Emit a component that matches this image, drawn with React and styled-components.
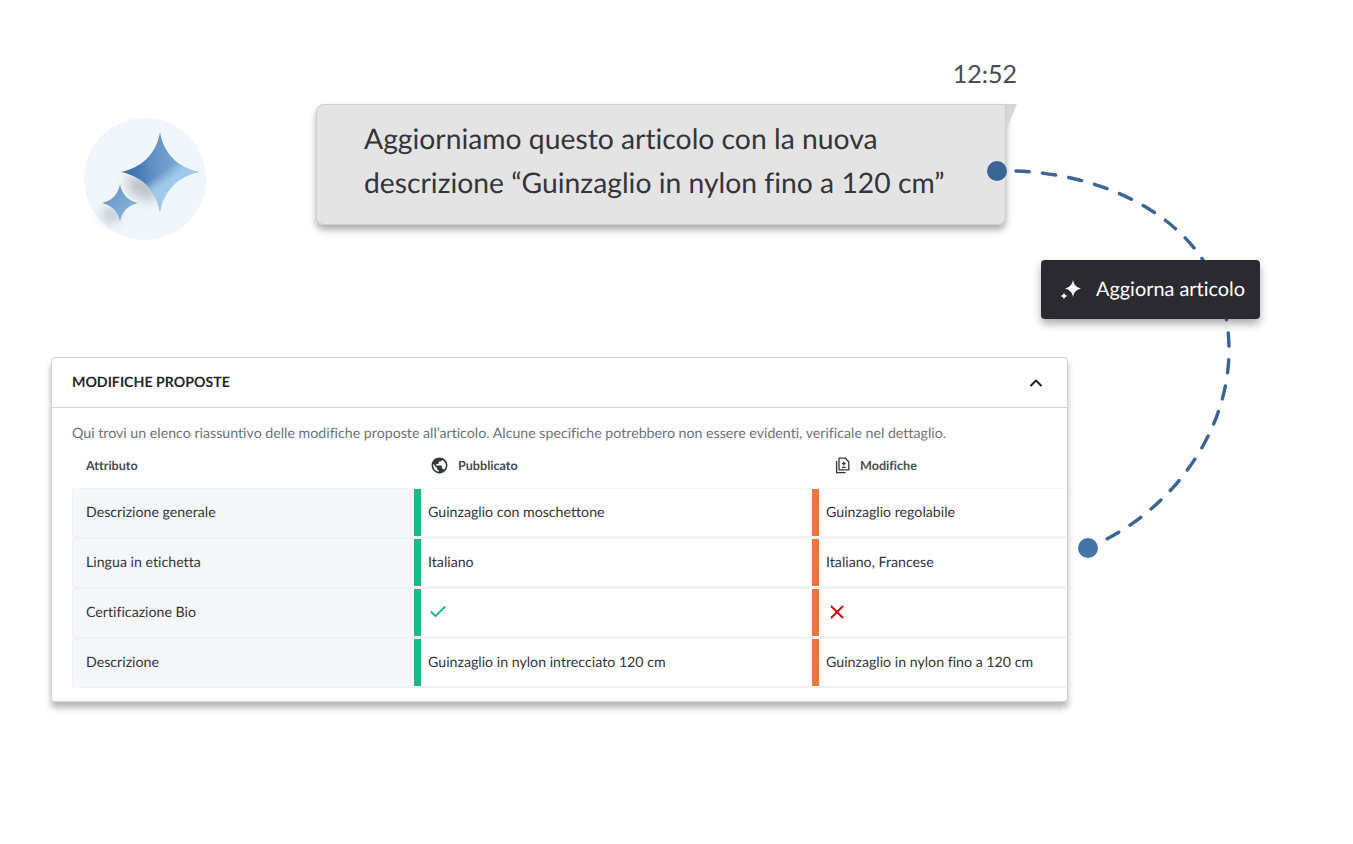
import React from 'react';
import styled, { createGlobalStyle } from 'styled-components';
import { ChevronUp, Check, X } from 'lucide-react';
import { MdPublic } from 'react-icons/md';

const rows = [
    { name: 'Descrizione generale', published: 'Guinzaglio con moschettone', changed: 'Guinzaglio regolabile' },
    { name: 'Lingua in etichetta', published: 'Italiano', changed: 'Italiano, Francese' },
    { name: 'Certificazione Bio', published: <Check size={20} strokeWidth={2.4} color="#1fb985" />, changed: <X size={22} strokeWidth={2} color="#d9000d" />, icons: true },
    { name: 'Descrizione', published: 'Guinzaglio in nylon intrecciato 120 cm', changed: 'Guinzaglio in nylon fino a 120 cm' },
];

// four pointed star with concave sides
const Star = ({ cx, cy, rx, ry, ...rest }) => {
    const ax = rx * 0.1, ay = ry * 0.42, bx = rx * 0.5, by = ry * 0.1;
    const d = `M${cx} ${cy - ry}
        C${cx + ax} ${cy - ay} ${cx + bx} ${cy - by} ${cx + rx} ${cy}
        C${cx + bx} ${cy + by} ${cx + ax} ${cy + ay} ${cx} ${cy + ry}
        C${cx - ax} ${cy + ay} ${cx - bx} ${cy + by} ${cx - rx} ${cy}
        C${cx - bx} ${cy - by} ${cx - ax} ${cy - ay} ${cx} ${cy - ry}Z`;
    return <path d={d} {...rest} />;
};

const AvatarStars = () => (
    <svg width="122" height="122" viewBox="0 0 122 122">
        <defs>
            <linearGradient id="bigFill" gradientUnits="userSpaceOnUse" x1="50" y1="56" x2="112" y2="50">
                <stop offset="0" stopColor="#3f74b2" />
                <stop offset="0.3" stopColor="#5f90c4" />
                <stop offset="1" stopColor="#8db5d9" />
            </linearGradient>
            <linearGradient id="bigLight" gradientUnits="userSpaceOnUse" x1="71" y1="58" x2="78" y2="68">
                <stop offset="0" stopColor="#a9d2ee" stopOpacity="0" />
                <stop offset="1" stopColor="#9fcae9" />
            </linearGradient>
            <linearGradient id="smallFill" x1="0" y1="0" x2="1" y2="1">
                <stop offset="0" stopColor="#5c8fc3" />
                <stop offset="1" stopColor="#93bddf" />
            </linearGradient>
            <filter id="soft" x="-80%" y="-80%" width="260%" height="260%">
                <feGaussianBlur stdDeviation="6" />
            </filter>
        </defs>
        <ellipse cx="58" cy="70" rx="17" ry="10" fill="#6f7680" opacity="0.42" filter="url(#soft)" transform="rotate(30 58 70)" />
        <ellipse cx="27" cy="97" rx="9" ry="7" fill="#6f7680" opacity="0.42" filter="url(#soft)" />
        <Star cx={76} cy={54} rx={39} ry={40} fill="url(#bigFill)" />
        <Star cx={76} cy={54} rx={39} ry={40} fill="url(#bigLight)" />
        <Star cx={36} cy={85} rx={18} ry={19} fill="url(#smallFill)" />
    </svg>
);

const SparkleIcon = () => (
    <svg width="24" height="24" viewBox="0 0 24 24">
        <Star cx={14} cy={10.5} rx={8} ry={8.5} fill="#fff" />
        <Star cx={5} cy={18} rx={3.5} ry={3.5} fill="#fff" />
    </svg>
);

const DocsIcon = () => (
    <svg width="16" height="17" viewBox="0 0 16 17" fill="none" stroke="#33363b" strokeWidth="1.3">
        <path d="M4 1.2h6.2l3.6 3.6v8H4z" strokeLinejoin="round" />
        <path d="M1.6 4v11.6h9" />
        <path d="M8.8 4.8v3.6M7 6.6h3.6M7 10.4h3.6" />
    </svg>
);

const App = () => (
    <Page>
        <GlobalStyle />
        <Connector width="1353" height="844" viewBox="0 0 1353 844">
            <path d="M1016 171 C1110 174 1229 225 1229 350 C1229 430 1175 505 1103 541" fill="none" stroke="#3a6595" strokeWidth="3.4" strokeLinecap="round" strokeDasharray="13.3 13.3" />
            <circle cx="997" cy="171" r="10" fill="#3a6595" />
            <circle cx="1088" cy="548" r="10" fill="#4673a8" />
        </Connector>
        <ChatRow>
            <Avatar><AvatarStars /></Avatar>
            <Message>
                <Time>12:52</Time>
                <Bubble>
                    Aggiorniamo questo articolo con la nuova<br />
                    descrizione “Guinzaglio in nylon fino a 120 cm”
                </Bubble>
            </Message>
        </ChatRow>
        <ActionButton>
            <SparkleIcon />
            <ActionLabel>Aggiorna articolo</ActionLabel>
        </ActionButton>
        <Card>
            <CardHeader>
                <CardTitle>MODIFICHE PROPOSTE</CardTitle>
                <ChevronUp size={20} strokeWidth={2.4} color="#24262b" />
            </CardHeader>
            <CardBody>
                <Intro>Qui trovi un elenco riassuntivo delle modifiche proposte all’articolo. Alcune specifiche potrebbero non essere evidenti, verificale nel dettaglio.</Intro>
                <Table>
                    <HeadCell>Attributo</HeadCell>
                    <HeadCell $icon><MdPublic size={19} color="#33363b" />Pubblicato</HeadCell>
                    <HeadCell $icon $shift><DocsIcon />Modifiche</HeadCell>
                    {rows.map(row => (
                        <React.Fragment key={row.name}>
                            <NameCell><CellText>{row.name}</CellText></NameCell>
                            <ValueCell $bar="#1fb985"><CellText $icon={row.icons}>{row.published}</CellText></ValueCell>
                            <ValueCell $bar="#f17638"><CellText $icon={row.icons}>{row.changed}</CellText></ValueCell>
                        </React.Fragment>
                    ))}
                </Table>
            </CardBody>
        </Card>
    </Page>
);

export default App;

const GlobalStyle = createGlobalStyle`
    body {
        margin: 0;
        background: #fff;
        font-family: Lato, "Noto Sans", sans-serif;
        font-variant-ligatures: none;
        text-rendering: geometricPrecision;
        color: #2e3035;
    }
`;

const Page = styled.div`
    position: relative;
    width: 1353px;
    height: 844px;
    padding: 59px 0 0 51px;
    box-sizing: border-box;
    overflow: hidden;
`;

const Connector = styled.svg`
    position: absolute;
    left: 0;
    top: 0;
    z-index: 2;
    pointer-events: none;
`;

const ChatRow = styled.div`
    display: flex;
    align-items: flex-start;
    height: 298px;
`;

const Avatar = styled.div`
    width: 122px;
    height: 122px;
    margin: 59px 110px 0 33px;
    border-radius: 50%;
    background: #f0f6fb;
`;

const Message = styled.div`
    display: flex;
    flex-direction: column;
`;

const Time = styled.div`
    width: 701px;
    height: 45px;
    text-align: right;
    font-size: 25px;
    line-height: 30px;
    color: #4a4d52;
`;

const Bubble = styled.div`
    position: relative;
    width: 690px;
    height: 121px;
    box-sizing: border-box;
    padding: 13px 0 0 48px;
    font-size: 28.3px;
    line-height: 44px;
    color: #33353a;
    background: #e4e4e4;
    border-radius: 8px 0 8px 8px;
    box-shadow: 0 0 0 1px #cfcfcf inset, 0 5px 7px rgba(0, 0, 0, 0.32);

    &::after {
        content: '';
        position: absolute;
        left: 100%;
        top: 0;
        width: 11px;
        height: 26px;
        background: #d6d6d6;
        clip-path: polygon(0 0, 100% 0, 0 100%);
    }
`;

const ActionButton = styled.div`
    position: absolute;
    z-index: 3;
    left: 1041px;
    top: 260px;
    width: 219px;
    height: 59px;
    box-sizing: border-box;
    padding-left: 18px;
    display: flex;
    align-items: center;
    gap: 13px;
    font-size: 19.9px;
    color: #fff;
    background: #2a2a30;
    border-radius: 4px;
    box-shadow: 0 5px 8px rgba(0, 0, 0, 0.32);
`;

const ActionLabel = styled.span`
    margin-bottom: 2px;
`;

const Card = styled.section`
    width: 1017px;
    height: 345px;
    box-sizing: border-box;
    border: 1px solid #d2d5dc;
    border-radius: 4px;
    background: #fff;
    box-shadow: 0 6px 6px rgba(0, 0, 0, 0.28);
`;

const CardHeader = styled.header`
    height: 50px;
    box-sizing: border-box;
    padding: 0 21px 0 20px;
    display: flex;
    align-items: center;
    justify-content: space-between;
    border-bottom: 1px solid #d2d5dc;
`;

const CardTitle = styled.h2`
    margin: 0;
    font-size: 14.2px;
    font-weight: 700;
    color: #24262b;
`;

const CardBody = styled.div`
    padding: 17px 0 0 20px;
`;

const Intro = styled.p`
    margin: 0;
    font-size: 14.2px;
    line-height: 18px;
    color: #6e7278;
`;

const Table = styled.div`
    display: grid;
    grid-template-columns: 342px 398px 254px;
    grid-template-rows: 45px repeat(4, 50px);
    font-size: 14.2px;
`;

const HeadCell = styled.div`
    display: flex;
    align-items: center;
    gap: ${p => (p.$icon ? '9px' : '0')};
    padding-left: ${p => (p.$shift ? '23px' : p.$icon ? '16px' : '14px')};
    font-size: 12.6px;
    font-weight: 700;
    color: #4a4d52;
`;

const CellText = styled.span`
    display: flex;
    align-items: center;
    margin-bottom: 2px;
`;

const NameCell = styled.div`
    display: flex;
    align-items: center;
    color: #33353a;
    background: #f6f7f9;
    border: 1px solid #eff0f3;
    border-right: none;
    border-radius: 3px 0 0 3px;
    padding-left: 13px;
`;

const ValueCell = styled.div`
    display: flex;
    align-items: center;
    padding-left: 14px;
    color: #33353a;
    background: linear-gradient(${p => p.$bar}, ${p => p.$bar}) left top / 7px 100% no-repeat;
    box-shadow: inset 0 -2px 0 #f1f2f4, inset 0 1px 0 #f4f5f6;
`;
